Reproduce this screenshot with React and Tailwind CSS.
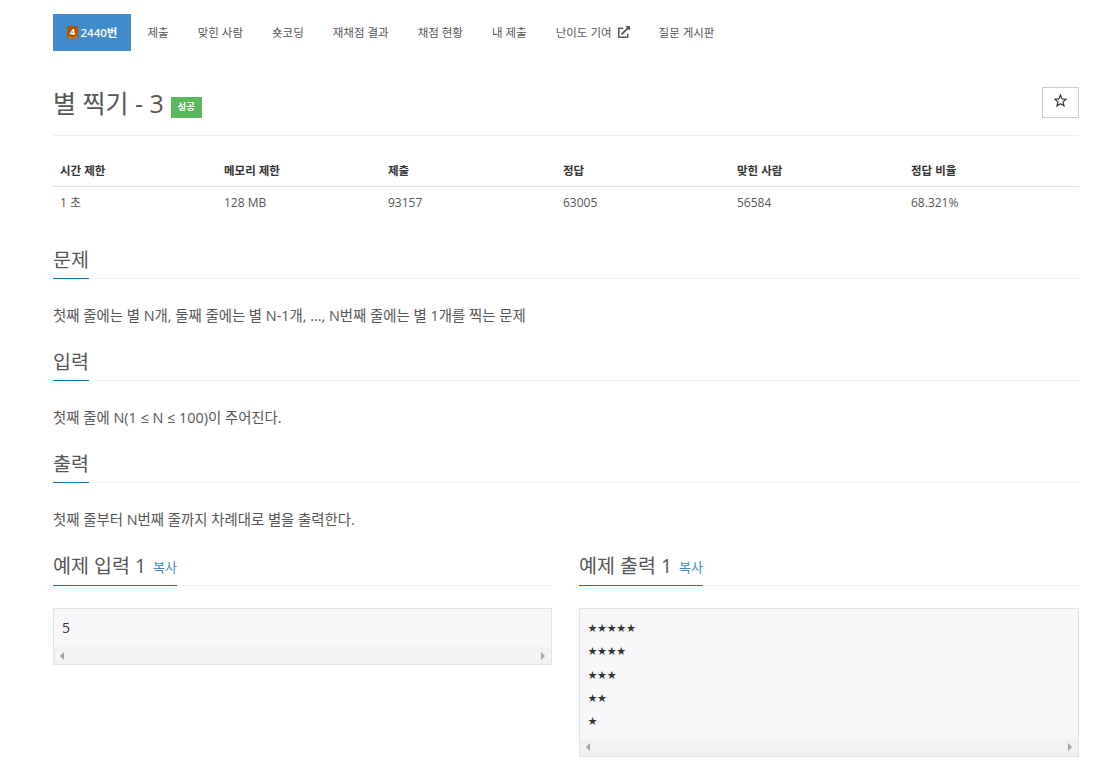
import { FaExternalLinkAlt } from "react-icons/fa";

const FONT = "font-['Open_Sans','Noto_Sans_CJK_KR',sans-serif]";

const tabs = ["제출", "맞힌 사람", "숏코딩", "재채점 결과", "채점 현황", "내 제출"];

const columns = [
  { head: "시간 제한", value: "1 초", width: "w-[171px]", pad: "pl-[7px]" },
  { head: "메모리 제한", value: "128 MB", width: "w-[164px]" },
  { head: "제출", value: "93157", width: "w-[175px]" },
  { head: "정답", value: "63005", width: "w-[174px]" },
  { head: "맞힌 사람", value: "56584", width: "w-[174px]" },
  { head: "정답 비율", value: "68.321%", width: "flex-1" },
];

const TierBadge = () => (
  <svg width="11" height="14" viewBox="0 0 11 14" className="shrink-0">
    <path d="M1 0h9a1 1 0 0 1 1 1v10l-5.500 3L0 11V1a1 1 0 0 1 1-1z" fill="#ad5600" />
    <path d="M1 10.500l4.500 2.200 4.500-2.200" fill="none" stroke="#e8a765" strokeWidth="0.800" />
    <text x="5.500" y="8.800" textAnchor="middle" fontSize="9.500" fontWeight="700" fill="#fff">
      4
    </text>
  </svg>
);

const StarIcon = () => (
  <svg width="13" height="13" viewBox="0 0 24 24" className="mb-[4px]">
    <polygon
      points="12,2 14.900,9 22.500,9.600 16.700,14.600 18.500,22 12,18 5.500,22 7.300,14.600 1.500,9.600 9.100,9"
      fill="none"
      stroke="#333333"
      strokeWidth="2.200"
    />
  </svg>
);

const Headline = ({ children, extra }) => (
  <div className="border-b border-dotted border-[#e5e5e5] h-[36px]">
    <div
      className={
        extra
          ? "inline-flex h-[36px] items-start border-b border-[#0076c0] text-[19.500px] leading-[27px] pt-[2px] text-[#555555]"
          : "inline-flex h-[36px] items-start border-b border-[#0076c0] text-[19.500px] leading-[27px] pt-[3px] text-[#555555]"
      }
    >
      {children}
      {extra && <a className="ml-[7px] mt-[7px] text-[13px] leading-[16px] text-[#428bca]">{extra}</a>}
    </div>
  </div>
);

const Section = ({ title, text, first }) => (
  <section className={first ? "mt-[24px]" : "mt-[19px]"}>
    <Headline>{title}</Headline>
    <p className="mt-[27px] text-[14.400px] leading-[20px] text-[#555555]">{text}</p>
  </section>
);

const Arrow = ({ dir }) => (
  <span
    className={
      dir === "left"
        ? "w-0 h-0 border-y-[4px] border-y-transparent border-r-[4px] border-r-[#a3a3a3]"
        : "w-0 h-0 border-y-[4px] border-y-transparent border-l-[4px] border-l-[#a3a3a3]"
    }
  />
);

const Sample = ({ title, lines, stars }) => (
  <div>
    <Headline extra="복사">{title}</Headline>
    <div className="mt-[22px] border border-[#e1e1e8] bg-[#f7f7f9]">
      <pre
        className={`${FONT} px-[8px] pt-[7px] ${stars ? "pb-[6px]" : "pb-[8px]"} text-[14px] leading-[23.330px] text-[#333333]`}
      >
        {lines.map((line, i) => (
          <div key={i} className={stars ? "text-[9px] tracking-[0.600px]" : ""}>
            {line}
          </div>
        ))}
      </pre>
      <div className="h-[17px] bg-[#f1f1f1] flex items-center justify-between px-[6px]">
        <Arrow dir="left" />
        <Arrow dir="right" />
      </div>
    </div>
  </div>
);

export default function App() {
  return (
    <div className={`${FONT} bg-white h-[780px] overflow-hidden pl-[53px] pr-[40px] pt-[14px] text-[#555555]`}>
      <ul className="flex h-[37px] items-center text-[11.500px]">
        <li className="h-full w-[78px] mr-[2px] bg-[#428bca] text-white flex items-center justify-center gap-[3px] font-semibold">
          <TierBadge />
          <span>2440번</span>
        </li>
        {tabs.map((tab) => (
          <li key={tab} className="px-[14.500px] text-[#555555]">
            {tab}
          </li>
        ))}
        <li className="px-[14.500px] flex items-center gap-[6px]">
          난이도 기여
          <FaExternalLinkAlt size={12} className="mb-[2px]" />
        </li>
        <li className="px-[14.500px]">질문 게시판</li>
      </ul>

      <div className="mt-[19px] h-[66px] border-b border-[#eeeeee] flex items-start justify-between">
        <div className="flex items-center h-[66px]">
          <h1 className="text-[25px] leading-[34px] text-[#555555]">별 찍기 - 3</h1>
          <span className="ml-[7px] mt-[9px] h-[21px] w-[31px] bg-[#5cb85c] text-white text-[9.500px] font-semibold flex items-center justify-center">
            성공
          </span>
        </div>
        <button className="mt-[17px] w-[37px] h-[31px] border border-[#cccccc] bg-white flex items-center justify-center">
          <StarIcon />
        </button>
      </div>

      <div className="mt-[20px] text-[12px]">
        <div className="flex h-[31px] items-center border-b border-[#dddddd] font-bold text-[11.500px] text-[#333333]">
          {columns.map((c) => (
            <div key={c.head} className={`${c.width} ${c.pad || ""}`}>
              {c.head}
            </div>
          ))}
        </div>
        <div className="flex h-[32px] items-center text-[#555555]">
          {columns.map((c) => (
            <div key={c.head} className={`${c.width} ${c.pad || ""}`}>
              {c.value}
            </div>
          ))}
        </div>
      </div>

      <Section first title="문제" text="첫째 줄에는 별 N개, 둘째 줄에는 별 N-1개, ..., N번째 줄에는 별 1개를 찍는 문제" />
      <Section title="입력" text="첫째 줄에 N(1 ≤ N ≤ 100)이 주어진다." />
      <Section title="출력" text="첫째 줄부터 N번째 줄까지 차례대로 별을 출력한다." />

      <div className="mt-[20px] grid grid-cols-[499px_500px] gap-x-[27px]">
        <Sample title="예제 입력 1" lines={["5"]} />
        <Sample stars title="예제 출력 1" lines={["★★★★★", "★★★★", "★★★", "★★", "★"]} />
      </div>
    </div>
  );
}
